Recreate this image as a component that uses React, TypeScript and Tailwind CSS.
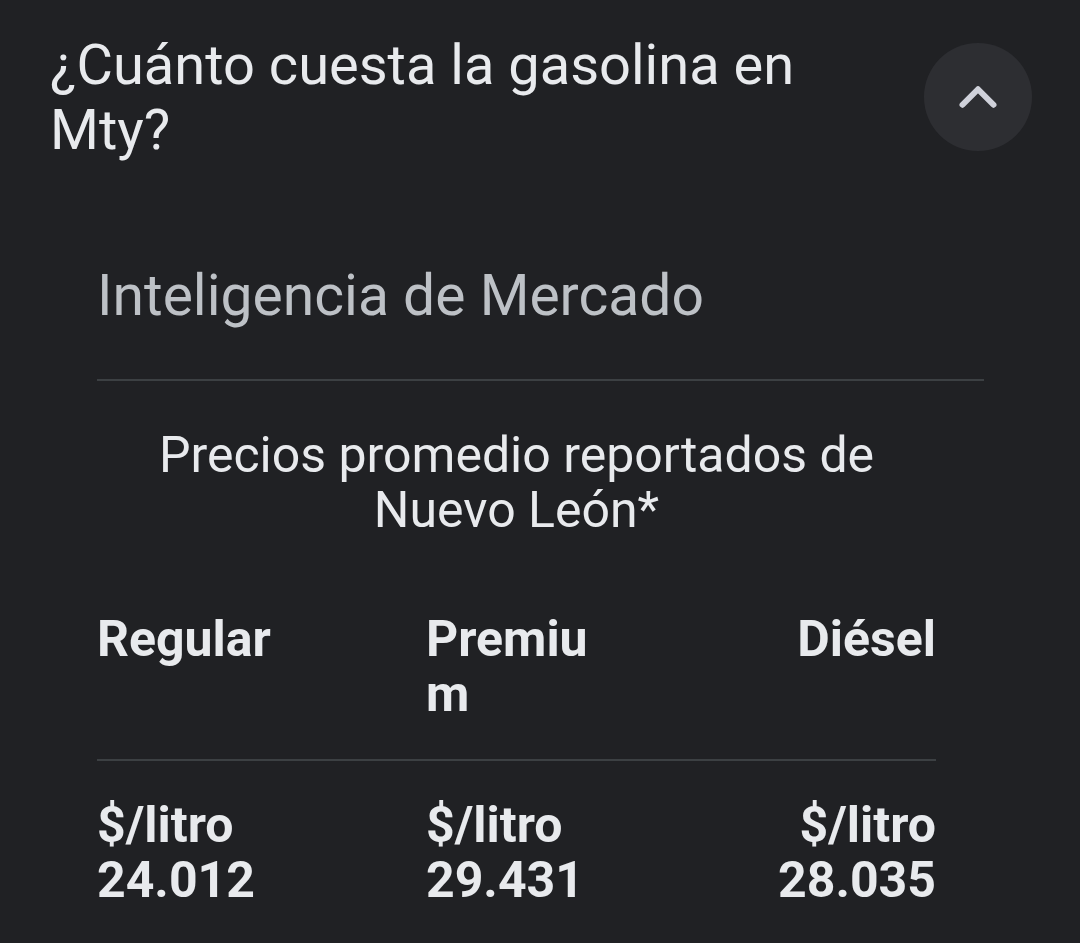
import { ChevronUp } from 'lucide-react';

const prices = [
  { name: 'Regular', value: '24.012', align: 'text-left' },
  { name: 'Premium', value: '29.431', align: 'text-left' },
  { name: 'Diésel', value: '28.035', align: 'text-right' },
];

export default function App() {
  return (
    <div className="min-h-[943px] w-[1080px] bg-[#202124] font-['Roboto',sans-serif] overflow-hidden">
      {/* Question header */}
      <div className="flex items-start justify-between pl-[50px] pr-[48px] pt-[33px]">
        <h1 className="w-[800px] text-[56px] leading-[65px] text-[#e8eaed]">
          ¿Cuánto cuesta la gasolina en Mty?
        </h1>
        <button className="mt-[10px] flex h-[108px] w-[108px] items-center justify-center rounded-full bg-[#2d2e32]">
          <ChevronUp className="h-[62px] w-[62px] text-[#cfd1da]" strokeWidth={2.3} />
        </button>
      </div>

      <div className="pl-[97px] pr-[96px]">
        <h2 className="mt-[100px] text-[57px] leading-[66px] text-[#bdc1c6]">Inteligencia de Mercado</h2>
        <div className="mt-[50px] h-[2px] bg-[#3c4043]" />

        <div className="w-[839px]">
          <p className="mt-[47px] text-center text-[50px] leading-[55px] text-[#e8eaed]">
            Precios promedio reportados de Nuevo León*
          </p>

          {/* Prices table */}
          <div className="mt-[74px] grid grid-cols-[329px_172px_1fr] font-bold text-[#e8eaed] text-[50px] leading-[55px]">
            {prices.map((p) => (
              <div key={p.name} className={`${p.align} break-all`}>
                {p.name}
              </div>
            ))}
          </div>
          <div className="mt-[37px] h-[2px] bg-[#3c4043]" />
          <div className="mt-[37px] grid grid-cols-[329px_172px_1fr] font-bold text-[#e8eaed] text-[50px] leading-[55px]">
            {prices.map((p) => (
              <div key={p.name} className={p.align}>
                <div>$/litro</div>
                <div>{p.value}</div>
              </div>
            ))}
          </div>
        </div>
      </div>
    </div>
  );
}
